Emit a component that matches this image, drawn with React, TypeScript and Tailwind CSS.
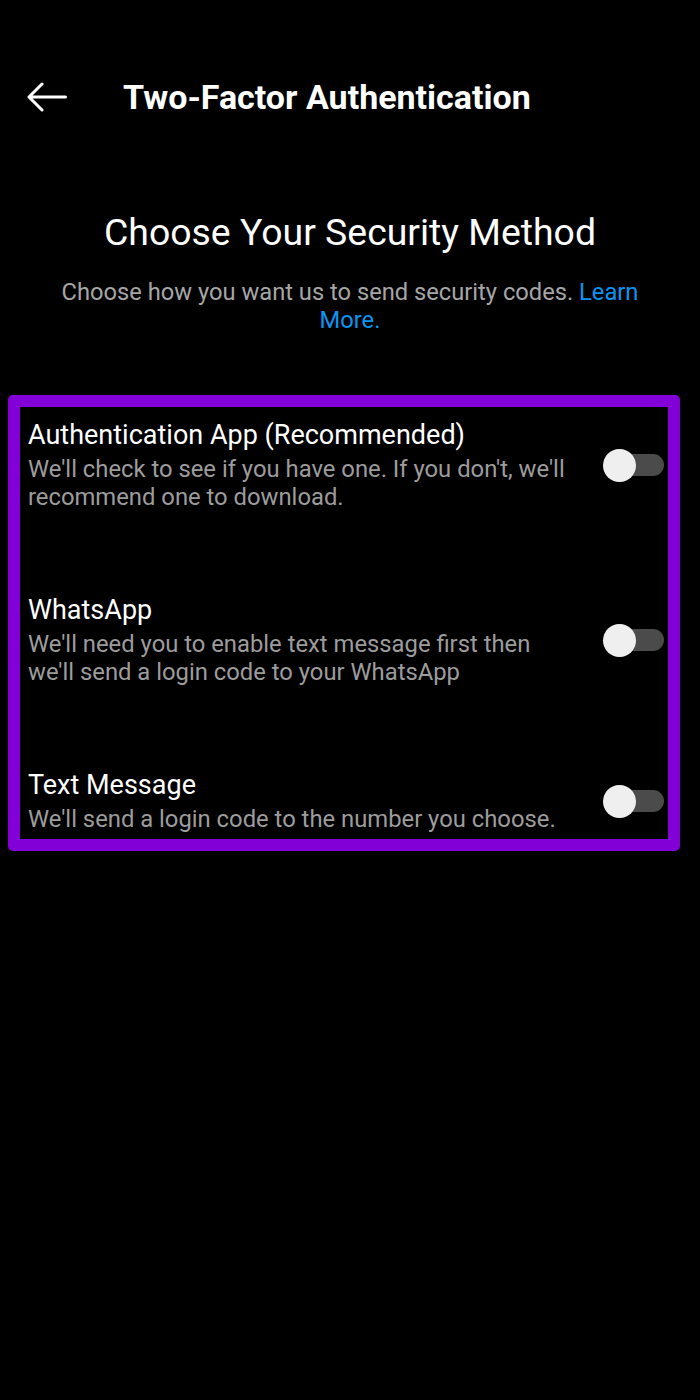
interface MethodRowProps {
  title: string;
  lines: string[];
}

function Toggle() {
  return (
    <div className="relative w-[61px] h-[33px] shrink-0 flex items-center">
      <div className="absolute right-0 w-[50px] h-[22px] rounded-full bg-[#4b4b4b]" />
      <div className="absolute left-0 w-[33px] h-[33px] rounded-full bg-[#efefef]" />
    </div>
  );
}

function MethodRow({ title, lines }: MethodRowProps) {
  return (
    <div className="flex items-center justify-between">
      <div>
        <p className="text-[27px] leading-[32px] text-white">{title}</p>
        <div className="mt-[4px] text-[23.8px] leading-[28px] text-[#9c9c9c]">
          {lines.map((l) => (
            <p key={l}>{l}</p>
          ))}
        </div>
      </div>
      <Toggle />
    </div>
  );
}

export default function App() {
  return (
    <div className="w-full h-[1400px] overflow-hidden bg-black pt-[76px] font-['Roboto',sans-serif]">
      {/* Header */}
      <div className="flex items-center h-[42px] px-[27px]">
        <svg width="40" height="30" viewBox="0 0 40 30" fill="none" stroke="white" strokeWidth="3" strokeLinecap="round" strokeLinejoin="round">
          <path d="M2 15H38.5M15 2L2 15L15 28" />
        </svg>
        <h1 className="ml-[56px] text-[34px] leading-[42px] font-bold text-white">Two-Factor Authentication</h1>
      </div>

      {/* Intro */}
      <div className="mt-[92px] px-[40px] text-center">
        <h2 className="text-[37.4px] leading-[44px] text-white">Choose Your Security Method</h2>
        <div className="mt-[24px] text-[23.7px] leading-[28px]">
          <p className="text-[#a6a6a6]">
            Choose how you want us to send security codes. <span className="text-[#0a95f2]">Learn</span>
          </p>
          <p className="text-[#0a95f2]">More.</p>
        </div>
      </div>

      {/* Methods box */}
      <div className="mt-[61px] mx-[8px] w-[672px] border-[12px] border-[#8200d7] rounded-[5px] pl-[8px] pr-[4px] pt-[12px] pb-[6px]">
        <div className="flex flex-col gap-[83px]">
          <MethodRow
            title="Authentication App (Recommended)"
            lines={["We'll check to see if you have one. If you don't, we'll", 'recommend one to download.']}
          />
          <MethodRow
            title="WhatsApp"
            lines={["We'll need you to enable text message first then", "we'll send a login code to your WhatsApp"]}
          />
          <MethodRow title="Text Message" lines={["We'll send a login code to the number you choose."]} />
        </div>
      </div>
    </div>
  );
}
